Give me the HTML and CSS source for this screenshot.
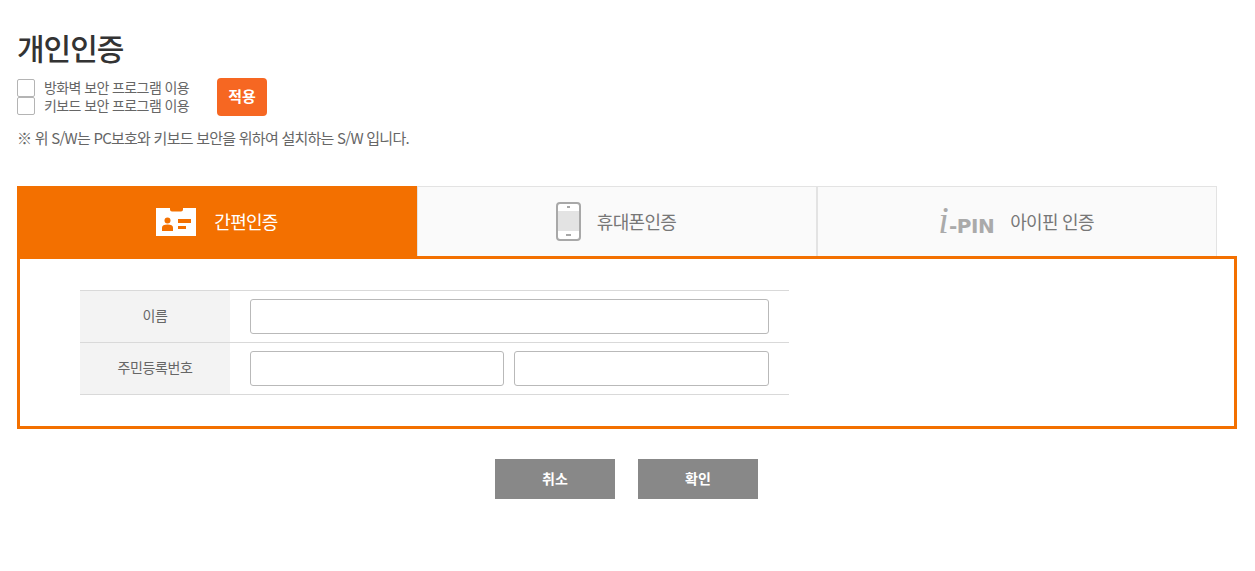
FILE: index.html
```html
<!DOCTYPE html>
<html lang="ko">
<head>
    <meta charset="UTF-8">
    <meta name="viewport" content="width=device-width, initial-scale=1.0">
    <title>개인인증</title>
    <link rel="stylesheet" href="styles.css">
</head>
<body>
    <h1 class="page-title">개인인증</h1>

    <div class="security">
        <div class="security-list">
            <label class="check-row"><input type="checkbox"><span>방화벽 보안 프로그램 이용</span></label>
            <label class="check-row"><input type="checkbox"><span>키보드 보안 프로그램 이용</span></label>
        </div>
        <button class="apply-button" type="button">적용</button>
    </div>
    <p class="notice">※ 위 S/W는 PC보호와 키보드 보안을 위하여 설치하는 S/W 입니다.</p>

    <ul class="tabs">
        <li class="tab active">
            <svg class="icon" width="40" height="28" viewBox="0 0 40 28">
                <path fill="#fff" d="M0 0h14v1.500a2 2 0 0 0 2 2h9a2 2 0 0 0 2-2V0h13v28H0z"/>
                <circle cx="11.500" cy="12.500" r="3" fill="#f37000"/>
                <path fill="#f37000" d="M6 23v-3.500c0-2 2-3 5.500-3s5.500 1 5.500 3V23z"/>
                <rect x="22" y="11" width="13" height="4" fill="#f37000"/>
                <rect x="22" y="18" width="8" height="3" fill="#f37000"/>
            </svg>
            <span>간편인증</span>
        </li>
        <li class="tab">
            <svg class="icon" width="25" height="39" viewBox="0 0 25 39">
                <rect x="1" y="1" width="23" height="37" rx="3" fill="#fff" stroke="#a8a8a8" stroke-width="2"/>
                <rect x="2" y="9" width="21" height="20" fill="#e3e3e3"/>
                <rect x="11" y="4" width="3" height="2" fill="#a8a8a8"/>
                <rect x="10" y="32" width="5" height="2" fill="#a8a8a8"/>
            </svg>
            <span>휴대폰인증</span>
        </li>
        <li class="tab">
            <span class="ipin"><i>i</i><b>-PIN</b></span>
            <span>아이핀 인증</span>
        </li>
    </ul>

    <div class="panel">
        <table class="form-table">
            <tr>
                <th>이름</th>
                <td><input class="field" type="text"></td>
            </tr>
            <tr>
                <th>주민등록번호</th>
                <td>
                    <div class="field-pair">
                        <input class="field" type="text">
                        <input class="field" type="password">
                    </div>
                </td>
            </tr>
        </table>
    </div>

    <div class="actions">
        <button class="gray-button" type="button">취소</button>
        <button class="gray-button" type="button">확인</button>
    </div>
</body>
</html>
```

FILE: styles.css
```css
body {
    margin: 0;
    padding: 27px 18px 0 17px;
    font-family: "Noto Sans CJK KR", "Noto Sans", sans-serif;
    color: #666;
}

.page-title {
    margin: 0;
    font-size: 30px;
    line-height: 40px;
    font-weight: 500;
    letter-spacing: -1px;
    color: #333;
}

.security {
    display: flex;
    align-items: center;
    margin-top: 11px;
}

.security-list {
    width: 200px;
}

.check-row {
    display: flex;
    align-items: center;
    height: 18px;
    font-size: 14px;
    letter-spacing: -0.6px;
    color: #666;
}

.check-row span {
    padding-bottom: 3px;
}

.check-row input {
    appearance: none;
    box-sizing: border-box;
    width: 18px;
    height: 18px;
    margin: 0 9px 0 0;
    background: #fff;
    border: 1px solid #b4b4b4;
    border-radius: 2px;
}

.apply-button {
    width: 50px;
    height: 38px;
    padding: 0 0 4px;
    border: none;
    border-radius: 4px;
    background-color: #f66722;
    color: #fff;
    font-family: inherit;
    font-size: 15px;
    font-weight: 700;
}

.notice {
    margin: 10px 0 0;
    font-size: 15px;
    line-height: 24px;
    letter-spacing: -0.75px;
    color: #666;
}

.tabs {
    display: flex;
    width: 1200px;
    margin: 36px 0 0;
    padding: 0;
    list-style: none;
}

.tab {
    box-sizing: border-box;
    display: flex;
    align-items: center;
    justify-content: center;
    gap: 16px;
    width: 400px;
    height: 70px;
    padding-right: 2px;
    background-color: #fafafa;
    border: 1px solid #e3e3e3;
    border-bottom: none;
    font-size: 18px;
    letter-spacing: -0.7px;
    color: #777;
}

.tab span:last-child {
    padding-bottom: 2px;
}

.tab.active {
    gap: 18px;
    height: 71px;
    padding-right: 0;
    background-color: #f37000;
    border: none;
    color: #fff;
}

.icon {
    flex: none;
}

.ipin {
    display: flex;
    align-items: baseline;
    gap: 1px;
    color: #aaa;
}

.ipin i {
    font-family: "Liberation Serif", serif;
    font-size: 38px;
    line-height: 30px;
}

.ipin b {
    font-family: "DejaVu Sans", sans-serif;
    font-size: 20px;
    letter-spacing: -0.5px;
    font-weight: 700;
}

.panel {
    box-sizing: border-box;
    width: 1220px;
    height: 173px;
    padding: 31px 60px 0;
    border: 3px solid #f37000;
    margin-top: -1px;
}

.form-table {
    width: 709px;
    border-collapse: collapse;
    border-top: 1px solid #d9d9d9;
}

.form-table tr {
    border-bottom: 1px solid #d9d9d9;
}

.form-table th {
    width: 150px;
    height: 48px;
    padding: 0 0 3px;
    background-color: #f3f3f3;
    font-size: 14px;
    font-weight: 400;
    letter-spacing: -0.4px;
    color: #666;
}

.form-table td {
    padding: 0 20px;
}

.field {
    box-sizing: border-box;
    display: block;
    width: 100%;
    height: 35px;
    border: 1px solid #b9b9b9;
    border-radius: 3px;
    background: #fff;
}

.field-pair {
    display: grid;
    grid-template-columns: 254px 255px;
    gap: 10px;
}

.actions {
    display: flex;
    justify-content: center;
    gap: 23px;
    width: 1219px;
    margin-top: 30px;
}

.gray-button {
    width: 120px;
    height: 40px;
    padding: 0 0 3px;
    border: none;
    background-color: #888;
    color: #fff;
    font-family: inherit;
    font-size: 14px;
    font-weight: 700;
}
```
